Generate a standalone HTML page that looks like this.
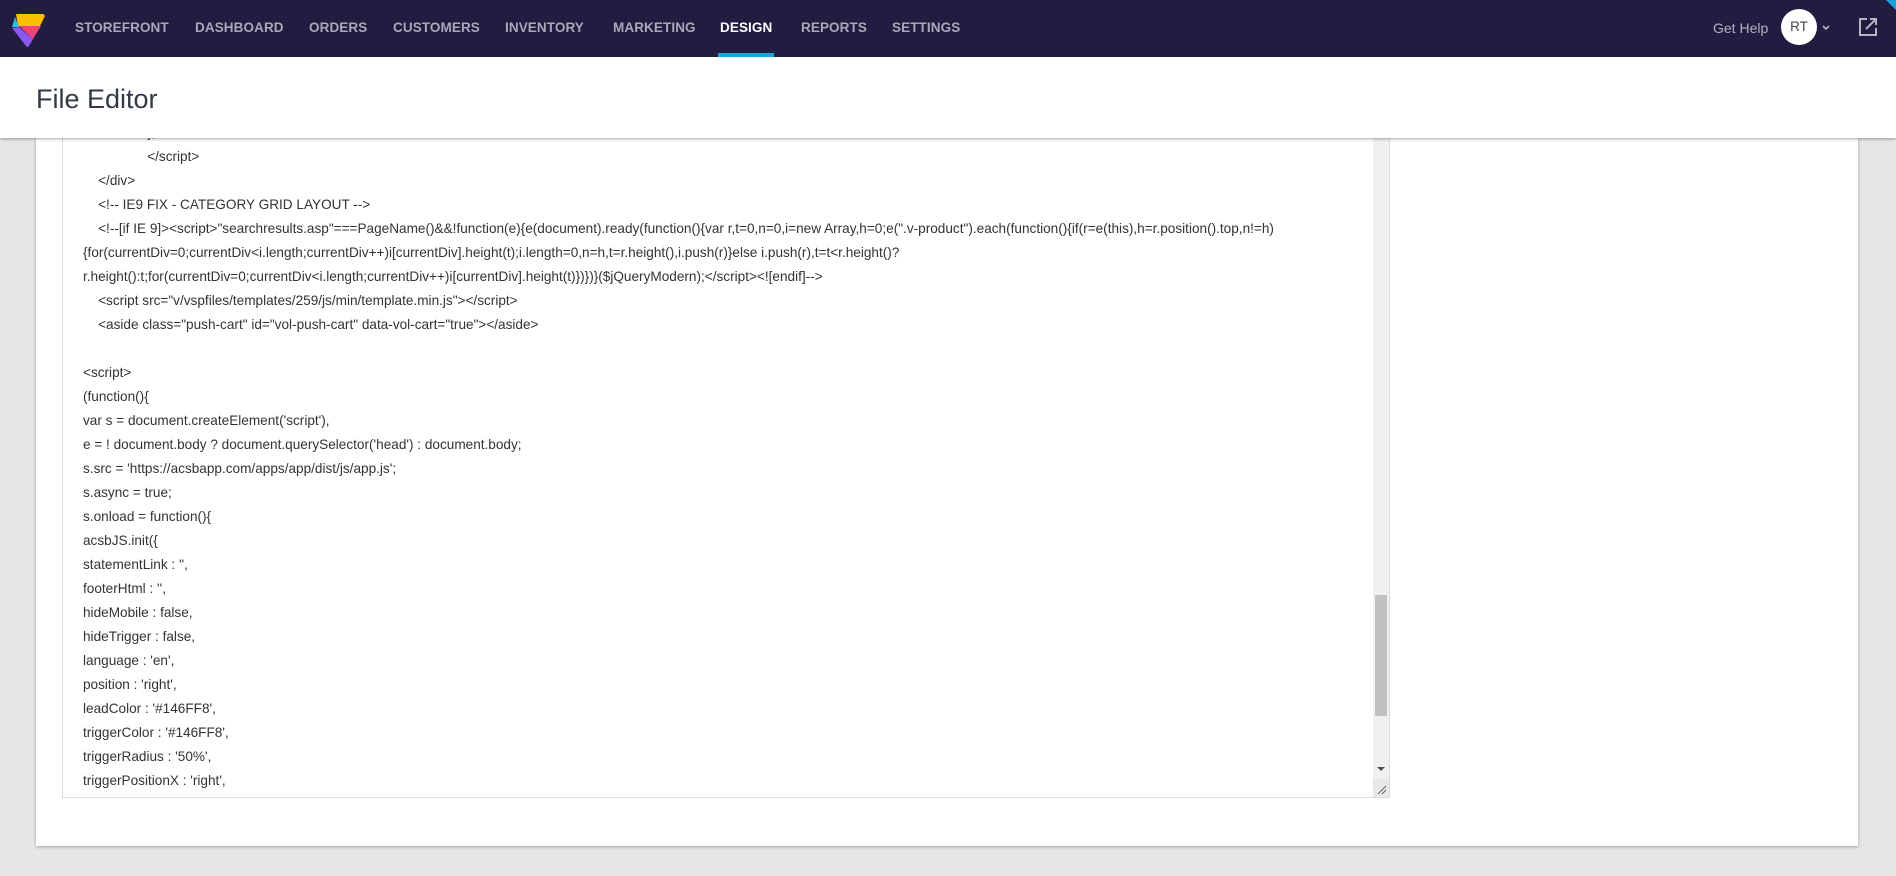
<!DOCTYPE html>
<html><head><meta charset="utf-8">
<style>
*{margin:0;padding:0;box-sizing:border-box}
body{width:1896px;height:876px;overflow:hidden;background:#e6e6e6;font-family:"Liberation Sans",Arial,sans-serif;position:relative}
.nav{position:absolute;left:0;top:0;width:1896px;height:57px;background:#201d40;z-index:5}
.nav .item{position:absolute;top:20px;font-size:13.5px;font-weight:bold;color:#a9a8b8;letter-spacing:0.1px}
.nav .item.active{color:#fff}
.uline{position:absolute;left:718px;top:53px;width:56px;height:4px;background:#1aa3e0}
.help{position:absolute;left:1713px;top:20px;font-size:14px;color:#b3b2c0}
.rt{position:absolute;left:1781px;top:9px;width:36px;height:36px;border-radius:50%;background:#fff;color:#444;font-size:13.5px;text-align:center;line-height:36px}
.header{position:absolute;left:0;top:57px;width:1896px;height:81px;background:#fff;z-index:4;box-shadow:0 1px 3px rgba(0,0,0,.35)}
.header h1{position:absolute;left:36px;top:27px;font-weight:normal;font-size:27px;color:#333a45}
.card{position:absolute;left:36px;top:120px;width:1822px;height:726px;background:#fff;box-shadow:0 1px 3px rgba(0,0,0,.3)}
.ta{position:absolute;left:62px;top:120px;width:1328px;height:678px;border:1px solid #dcdcdc;border-top:none;overflow:hidden;background:#fff}
.code{position:absolute;left:20px;top:1px;font-size:13.6px;color:#333;white-space:pre;line-height:24px}
.sb{position:absolute;right:0;top:0;width:16px;height:100%;background:#f0f0f0}
.thumb{position:absolute;left:2px;width:12px;top:475px;height:121px;background:#c1c1c1}
</style></head><body>
<div class="nav">
<svg style="position:absolute;left:8px;top:10px" width="40" height="40" viewBox="0 0 40 40">
<path d="M8 4 L34 4 Q38 4 36 8 L32 16 L10 16 Z" fill="#fdc000"/>
<path d="M7 7 L4 17 L11 17 Z" fill="#1ec4e0"/>
<path d="M11 16 L33 16 L25 29 Z" fill="#f1417b"/>
<path d="M4 18 L11 17 L25 29 L21 36 Q20 38 18 36 Z" fill="#8a58f0"/>
</svg>
<span class="item" style="left:75px">STOREFRONT</span>
<span class="item" style="left:195px">DASHBOARD</span>
<span class="item" style="left:309px">ORDERS</span>
<span class="item" style="left:393px">CUSTOMERS</span>
<span class="item" style="left:505px">INVENTORY</span>
<span class="item" style="left:613px">MARKETING</span>
<span class="item active" style="left:720px">DESIGN</span>
<span class="item" style="left:801px">REPORTS</span>
<span class="item" style="left:892px">SETTINGS</span>
<div class="uline"></div>
<span class="help">Get Help</span>
<div class="rt">RT</div>
<svg style="position:absolute;left:1821px;top:24px" width="10" height="8" viewBox="0 0 10 8"><path d="M2 2 L5 5 L8 2" stroke="#b3b2c0" stroke-width="1.6" fill="none"/></svg>
<svg style="position:absolute;left:1858px;top:17px" width="20" height="20" viewBox="0 0 20 20"><path d="M9 2 H2 V18 H18 V11" stroke="#b3b2c0" stroke-width="2" fill="none"/><path d="M12 2 H18 V8 M18 2 L8 12" stroke="#b3b2c0" stroke-width="2" fill="none"/></svg>
<svg style="position:absolute;left:1886px;top:0" width="10" height="10"><path d="M0 0 L10 0 L10 10 Z" fill="#1aa3e0"/></svg>
</div>
<div class="header"><h1>File Editor</h1></div>
<div class="card"></div>
<div class="ta">
<div class="code">                 },
                 &lt;/script&gt;
    &lt;/div&gt;
    &lt;!-- IE9 FIX - CATEGORY GRID LAYOUT --&gt;
    &lt;!--[if IE 9]&gt;&lt;script&gt;"searchresults.asp"===PageName()&amp;&amp;!function(e){e(document).ready(function(){var r,t=0,n=0,i=new Array,h=0;e(".v-product").each(function(){if(r=e(this),h=r.position().top,n!=h)
{for(currentDiv=0;currentDiv&lt;i.length;currentDiv++)i[currentDiv].height(t);i.length=0,n=h,t=r.height(),i.push(r)}else i.push(r),t=t&lt;r.height()?
r.height():t;for(currentDiv=0;currentDiv&lt;i.length;currentDiv++)i[currentDiv].height(t)})})}($jQueryModern);&lt;/script&gt;&lt;![endif]--&gt;
    &lt;script src="v/vspfiles/templates/259/js/min/template.min.js"&gt;&lt;/script&gt;
    &lt;aside class="push-cart" id="vol-push-cart" data-vol-cart="true"&gt;&lt;/aside&gt;

&lt;script&gt;
(function(){
var s = document.createElement('script'),
e = ! document.body ? document.querySelector('head') : document.body;
s.src = 'https://acsbapp.com/apps/app/dist/js/app.js';
s.async = true;
s.onload = function(){
acsbJS.init({
statementLink : '',
footerHtml : '',
hideMobile : false,
hideTrigger : false,
language : 'en',
position : 'right',
leadColor : '#146FF8',
triggerColor : '#146FF8',
triggerRadius : '50%',
triggerPositionX : 'right',</div>
<div class="sb"><div class="thumb"></div>
<svg style="position:absolute;left:4px;top:646px" width="8" height="6"><path d="M0 1 L8 1 L4 5 Z" fill="#505050"/></svg>
<div style="position:absolute;left:0;bottom:0;width:16px;height:18px;background:#e8e8e8"></div>
<svg style="position:absolute;left:4px;bottom:2px" width="10" height="10"><path d="M1 9 L9 1 M5 9 L9 5" stroke="#666" stroke-width="1"/></svg>
</div>
</div>
</body></html>
